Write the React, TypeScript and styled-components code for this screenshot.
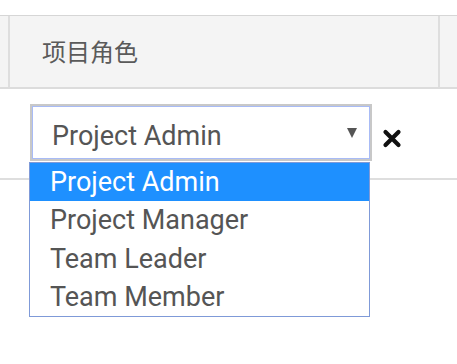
import React from "react";
import styled, { createGlobalStyle } from "styled-components";

const GlobalStyle = createGlobalStyle`
  html, body {
    margin: 0;
    padding: 0;
    background: #ffffff;
    height: 100%;
  }
  body {
    font-family: Roboto, "Noto Sans", "Liberation Sans", sans-serif;
  }
  #root {
    min-height: 100%;
  }
`;

const Page = styled.div`
  padding-top: 15px;
  width: 457px;
  min-height: 364px;
  box-sizing: border-box;
`;

const HeaderRow = styled.div`
  display: grid;
  grid-template-columns: 8px 1fr 17px;
  height: 74px;
  box-sizing: border-box;
  background: #f4f4f4;
  border-top: 1px solid #d6d6d6;
  border-bottom: 2px solid #dcdcdc;
`;

const HeadCell = styled.div<{ $bordered?: boolean }>`
  display: flex;
  align-items: center;
  box-sizing: border-box;
  border-left: ${(p) => (p.$bordered ? "2px solid #dedede" : "none")};
  border-right: ${(p) => (p.$bordered ? "2px solid #dedede" : "none")};
  padding-left: ${(p) => (p.$bordered ? "32px" : "0")};
  padding-bottom: 3px;
  font-family: "Noto Sans CJK SC", "Noto Sans", sans-serif;
  font-size: 24px;
  color: #5a5a5a;
`;

const BodyRow = styled.div`
  position: relative;
  height: 91px;
  box-sizing: border-box;
  border-bottom: 2px solid #dedede;
  padding: 15px 0 0 30px;
`;

const SelectWrap = styled.div`
  display: flex;
  align-items: center;
  gap: 10px;
`;

const SelectBox = styled.div`
  width: 342px;
  height: 57px;
  box-sizing: border-box;
  border: 2px solid #c8c8c8;
  box-shadow: inset 0 0 0 1px #a8bbf6;
  background: #ffffff;
  display: flex;
  align-items: center;
  justify-content: space-between;
  padding: 6px 13px 0 20px;
  font-size: 27px;
  color: #555555;
`;

const Arrow = styled.span`
  width: 0;
  height: 0;
  border-left: 5.5px solid transparent;
  border-right: 5.5px solid transparent;
  border-top: 10px solid #555555;
  margin-bottom: 5px;
`;

const CloseIcon = styled.svg`
  display: block;
  width: 20px;
  height: 19px;
  margin-top: 12px;
`;

const Dropdown = styled.ul`
  position: absolute;
  z-index: 5;
  left: 29px;
  top: 73px;
  width: 341px;
  box-sizing: border-box;
  margin: 0;
  padding: 0;
  list-style: none;
  border: 1px solid #7f9ad8;
  background: #ffffff;
`;

const Option = styled.li<{ $active?: boolean }>`
  display: block;
  height: 38.25px;
  line-height: 38.25px;
  padding-left: 20px;
  font-size: 27px;
  background: ${(p) => (p.$active ? "#1e90ff" : "transparent")};
  color: ${(p) => (p.$active ? "#ffffff" : "#555555")};
  white-space: nowrap;
`;

const options = ["Project Admin", "Project Manager", "Team Leader", "Team Member"];

export default function App() {
  return (
    <>
      <GlobalStyle />
      <Page>
        <HeaderRow>
          <HeadCell />
          <HeadCell $bordered>项目角色</HeadCell>
          <HeadCell />
        </HeaderRow>
        <BodyRow>
          <SelectWrap>
            <SelectBox>
              <span>Project Admin</span>
              <Arrow />
            </SelectBox>
            <CloseIcon viewBox="0 0 20 19">
              <path
                d="M3.5 3 L16.5 16 M16.5 3 L3.5 16"
                stroke="#111111"
                strokeWidth="4.2"
                strokeLinecap="round"
              />
            </CloseIcon>
          </SelectWrap>
          <Dropdown>
            {options.map((o, i) => (
              <Option key={o} $active={i === 0}>
                {o}
              </Option>
            ))}
          </Dropdown>
        </BodyRow>
      </Page>
    </>
  );
}
